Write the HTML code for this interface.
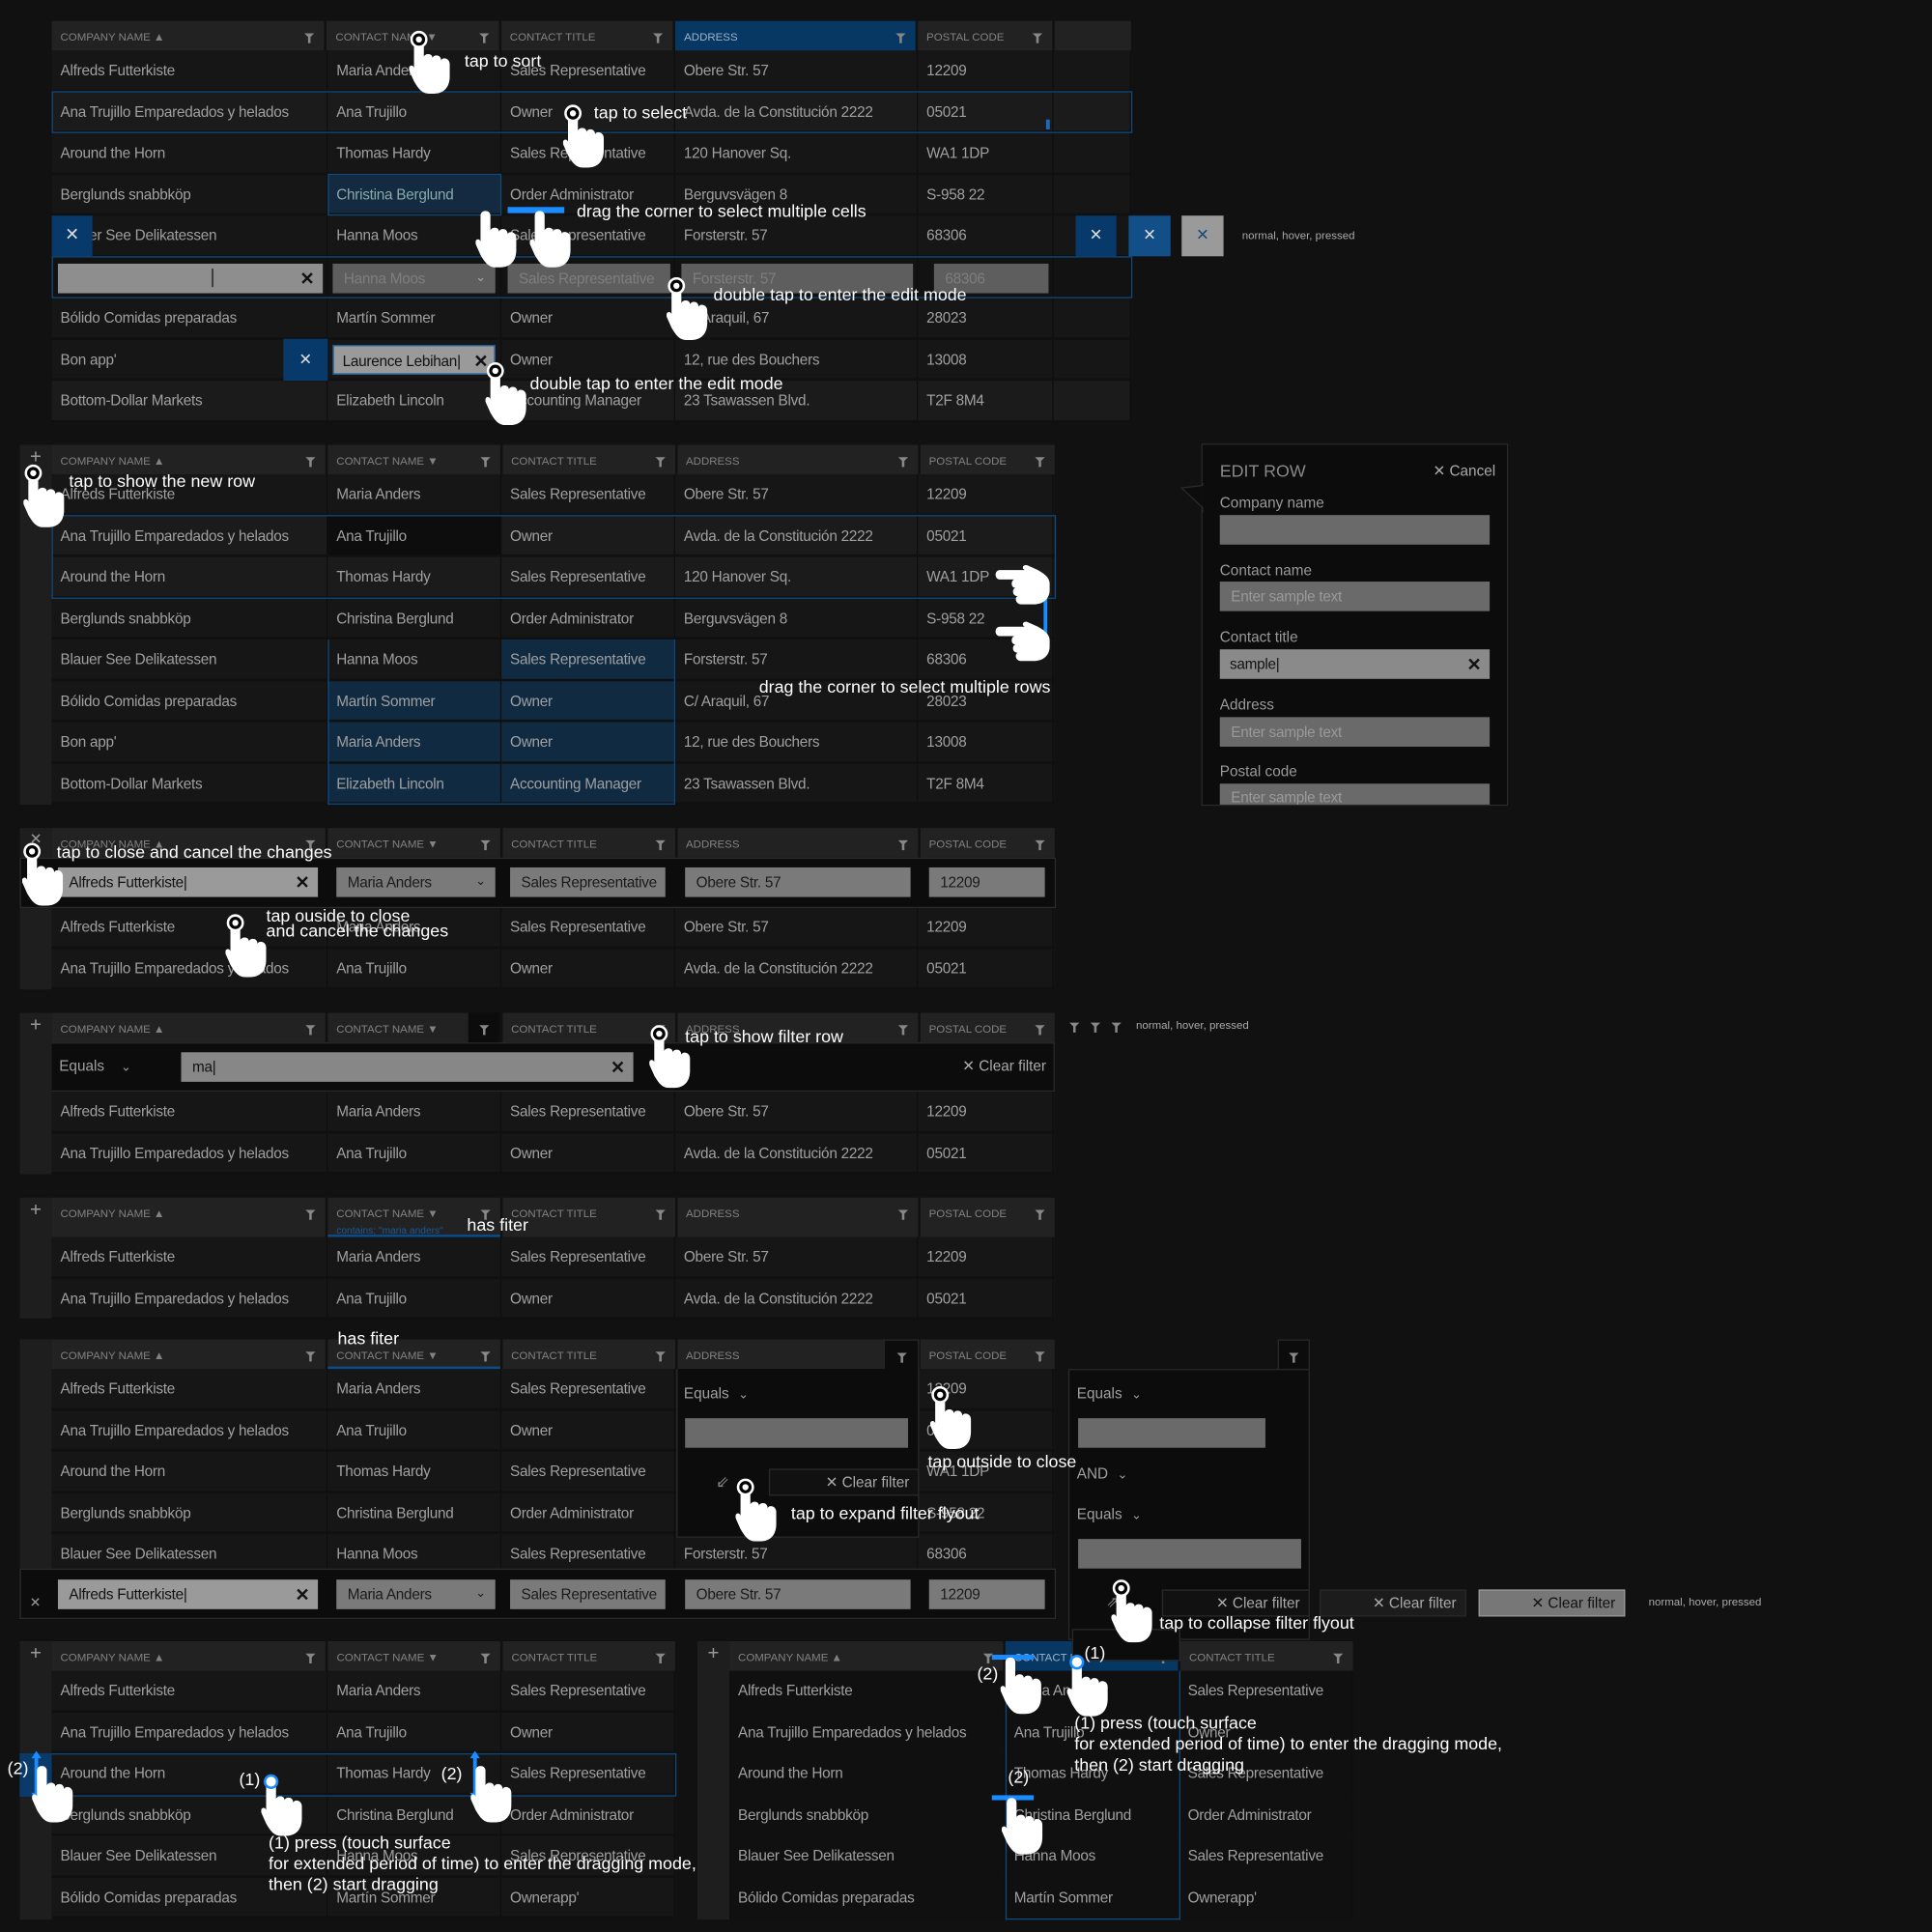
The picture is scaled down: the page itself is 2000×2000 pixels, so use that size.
<!DOCTYPE html>
<html><head><meta charset="utf-8">
<style>
html,body{margin:0;padding:0;background:#111;width:2000px;height:2000px;overflow:hidden}
#s{position:absolute;left:0;top:0;width:1568px;height:1568px;transform:scale(1.27551);transform-origin:0 0;font-family:"Liberation Sans",sans-serif;color:#a0a0a0}
.a{position:absolute}
.t{position:absolute}
.h,.r{display:flex;box-sizing:border-box}
.h{height:24px;background:#111}
.h>span{position:relative;box-sizing:border-box;background:#222;margin-right:2px;font-size:9px;color:#828282;line-height:26px;padding-left:7px;text-transform:uppercase;white-space:nowrap;overflow:hidden}
.h>span:last-child{margin-right:0}
.r{height:33.5px;background:#161616;border-bottom:2px solid #101010}
.r.l{background:#1b1b1b}
.r>span{box-sizing:border-box;border-right:1px solid #0e0e0e;font-size:12px;letter-spacing:-0.2px;line-height:33px;padding-left:7px;white-space:nowrap;overflow:hidden}
.h>span:nth-child(1),.r>span:nth-child(1){width:224px}
.h>span:nth-child(2),.r>span:nth-child(2){width:141px}
.h>span:nth-child(3),.r>span:nth-child(3){width:141px}
.h>span:nth-child(4),.r>span:nth-child(4){width:197px}
.h>span:nth-child(5),.r>span:nth-child(5){width:110px}
.h>span:nth-child(6),.r>span:nth-child(6){width:63px}
.fi{position:absolute;right:8px;top:10px;width:0;height:0;border-left:4px solid transparent;border-right:4px solid transparent;border-top:4px solid #888}
.fi:after{content:"";position:absolute;left:-1px;top:-1px;width:2px;height:5px;background:#888}
.strip{position:absolute;background:#1e1e1e;width:26px}
.plus{position:absolute;left:0;width:26px;text-align:center;color:#999;font-size:16px}
.inp{position:absolute;box-sizing:border-box;height:24px;font-size:12px;letter-spacing:-0.2px;line-height:24px;padding-left:9px;white-space:nowrap;overflow:hidden}
.g1{background:#9a9a9a;color:#111}
.g2{background:#6a6a6a;color:#1a1a1a}
.g3{background:#5e5e5e;color:#7e7e7e}
.x{position:absolute;right:7px;top:0;font-size:14px;font-weight:bold;color:#111}
.n{position:absolute;color:#fff;font-size:14px;white-space:nowrap;line-height:17px}
.sm{position:absolute;color:#aaa;font-size:9px;white-space:nowrap}
.bx{position:absolute;box-sizing:border-box}
.lab{position:absolute;font-size:12px;color:#999}
</style></head><body><div id="s">

<!-- ================= TABLE 1 ================= -->
<div class="t" style="left:42px;top:17px;width:876px">
<div class="h"><span>Company Name ▲<i class="fi"></i></span><span>Contact Name ▼<i class="fi"></i></span><span>Contact Title<i class="fi"></i></span><span style="background:#073763;color:#9fb4c8">Address<i class="fi"></i></span><span>Postal Code<i class="fi"></i></span><span></span></div>
<div class="r"><span>Alfreds Futterkiste</span><span>Maria Anders</span><span>Sales Representative</span><span>Obere Str. 57</span><span>12209</span><span></span></div>
<div class="r l"><span>Ana Trujillo Emparedados y helados</span><span>Ana Trujillo</span><span>Owner</span><span>Avda. de la Constitución 2222</span><span>05021</span><span></span></div>
<div class="r"><span>Around the Horn</span><span>Thomas Hardy</span><span>Sales Representative</span><span>120 Hanover Sq.</span><span>WA1 1DP</span><span></span></div>
<div class="r"><span>Berglunds snabbköp</span><span style="background:#132a40;color:#8aa">Christina Berglund</span><span>Order Administrator</span><span>Berguvsvägen 8</span><span>S-958 22</span><span></span></div>
<div class="r"><span>Blauer See Delikatessen</span><span>Hanna Moos</span><span>Sales Representative</span><span>Forsterstr. 57</span><span>68306</span><span></span></div>
<div class="r" style="background:#121212"><span></span><span></span><span></span><span></span><span></span><span></span></div>
<div class="r"><span>Bólido Comidas preparadas</span><span>Martín Sommer</span><span>Owner</span><span>C/ Araquil, 67</span><span>28023</span><span></span></div>
<div class="r"><span>Bon app'</span><span></span><span>Owner</span><span>12, rue des Bouchers</span><span>13008</span><span></span></div>
<div class="r l"><span>Bottom-Dollar Markets</span><span>Elizabeth Lincoln</span><span>Accounting Manager</span><span>23 Tsawassen Blvd.</span><span>T2F 8M4</span><span></span></div>
</div>
<div class="bx" style="left:42px;top:74px;width:877px;height:34px;border:1.5px solid #0f4a80"></div>
<div class="bx" style="left:266px;top:141px;width:141px;height:34px;border:1px solid #124a7c"></div>
<div class="bx" style="left:849px;top:97px;width:3px;height:8px;background:#1a6ac0"></div>
<div class="bx" style="left:42px;top:175px;width:33px;height:33px;background:#073a6a;color:#ddd;text-align:center;line-height:31px;font-size:14px">✕</div>
<div class="bx" style="left:873px;top:175px;width:33px;height:33px;background:#073a6a;color:#ddd;text-align:center;line-height:31px;font-size:13px">✕</div>
<div class="bx" style="left:916px;top:175px;width:34px;height:33px;background:#124e88;color:#ddd;text-align:center;line-height:31px;font-size:13px">✕</div>
<div class="bx" style="left:959px;top:175px;width:34px;height:33px;background:#9a9a9a;color:#1a4a7a;text-align:center;line-height:31px;font-size:13px">✕</div>
<div class="sm" style="left:1008px;top:186px">normal, hover, pressed</div>
<div class="bx" style="left:42px;top:208px;width:877px;height:34px;border:1.5px solid #0f4a80"></div>
<div class="inp" style="left:47px;top:214px;width:215px;background:#8e8e8e;color:#111"><span style="position:absolute;left:125px;top:4px;width:1px;height:15px;background:#111"></span><span class="x">✕</span></div>
<div class="inp g3" style="left:270px;top:214px;width:132px">Hanna Moos<span style="position:absolute;right:8px;color:#aaa;font-size:10px">⌄</span></div>
<div class="inp g3" style="left:412px;top:214px;width:132px">Sales Representative</div>
<div class="inp g3" style="left:553px;top:214px;width:188px">Forsterstr. 57</div>
<div class="inp g3" style="left:758px;top:214px;width:93px">68306</div>
<div class="bx" style="left:230px;top:275px;width:36px;height:34px;background:#073a6a;color:#ddd;text-align:center;line-height:33px;font-size:13px">✕</div>
<div class="inp g1" style="left:270px;top:280px;width:132px;border:1px solid #145a9a;padding-left:7px">Laurence Lebihan|<span class="x" style="right:5px">✕</span></div>

<!-- ================= TABLE 2 ================= -->
<div class="strip" style="left:16px;top:361px;height:292px"><div class="plus" style="top:2px">+</div></div>
<div class="t" style="left:42px;top:361px;width:814px">
<div class="h"><span>Company Name ▲<i class="fi"></i></span><span>Contact Name ▼<i class="fi"></i></span><span>Contact Title<i class="fi"></i></span><span>Address<i class="fi"></i></span><span>Postal Code<i class="fi"></i></span></div>
<div class="r"><span>Alfreds Futterkiste</span><span>Maria Anders</span><span>Sales Representative</span><span>Obere Str. 57</span><span>12209</span></div>
<div class="r l"><span>Ana Trujillo Emparedados y helados</span><span style="background:#0d0d0d">Ana Trujillo</span><span>Owner</span><span>Avda. de la Constitución 2222</span><span>05021</span></div>
<div class="r l"><span>Around the Horn</span><span>Thomas Hardy</span><span>Sales Representative</span><span>120 Hanover Sq.</span><span>WA1 1DP</span></div>
<div class="r"><span>Berglunds snabbköp</span><span>Christina Berglund</span><span>Order Administrator</span><span>Berguvsvägen 8</span><span>S-958 22</span></div>
<div class="r"><span>Blauer See Delikatessen</span><span>Hanna Moos</span><span style="background:#102a42">Sales Representative</span><span>Forsterstr. 57</span><span>68306</span></div>
<div class="r"><span>Bólido Comidas preparadas</span><span style="background:#102a42">Martín Sommer</span><span style="background:#102a42">Owner</span><span>C/ Araquil, 67</span><span>28023</span></div>
<div class="r"><span>Bon app'</span><span style="background:#102a42">Maria Anders</span><span style="background:#102a42">Owner</span><span>12, rue des Bouchers</span><span>13008</span></div>
<div class="r"><span>Bottom-Dollar Markets</span><span style="background:#102a42">Elizabeth Lincoln</span><span style="background:#102a42">Accounting Manager</span><span>23 Tsawassen Blvd.</span><span>T2F 8M4</span></div>
</div>
<div class="bx" style="left:42px;top:418px;width:815px;height:68px;border:1.5px solid #0f4a80"></div>
<div class="bx" style="left:266px;top:519px;width:282px;height:134px;border:1px solid #0f4a80;border-top:none"></div>
<div class="bx" style="left:847px;top:485px;width:3px;height:36px;background:#1a8cff"></div>

<!-- Edit row panel -->
<div class="bx" style="left:975px;top:360px;width:249px;height:294px;background:#0c0c0c;border:1px solid #2a2a2a"></div>
<svg class="a" style="left:958px;top:392px" width="20" height="24"><path d="M18 0 L18 2 L1 4 L18 20 L18 24" fill="#0c0c0c" stroke="#2a2a2a" stroke-width="1"/></svg>
<div class="a" style="left:990px;top:374px;font-size:14px;color:#888">EDIT ROW</div>
<div class="a" style="left:1163px;top:375px;font-size:12px;color:#aaa">✕ Cancel</div>
<div class="lab" style="left:990px;top:401px">Company name</div>
<div class="inp" style="left:990px;top:418px;width:219px;background:#6a6a6a"></div>
<div class="lab" style="left:990px;top:456px">Contact name</div>
<div class="inp" style="left:990px;top:472px;width:219px;background:#6a6a6a;color:#999">Enter sample text</div>
<div class="lab" style="left:990px;top:510px">Contact title</div>
<div class="inp" style="left:990px;top:527px;width:219px;background:#8a8a8a;color:#111;padding-left:8px">sample|<span class="x">✕</span></div>
<div class="lab" style="left:990px;top:565px">Address</div>
<div class="inp" style="left:990px;top:582px;width:219px;background:#6a6a6a;color:#999">Enter sample text</div>
<div class="lab" style="left:990px;top:619px">Postal code</div>
<div class="inp" style="left:990px;top:636px;width:219px;height:17px;background:#6a6a6a;color:#999;line-height:22px">Enter sample text</div>

<!-- ================= TABLE 3 ================= -->
<div class="strip" style="left:16px;top:672px;height:131px"><div class="plus" style="top:2px;font-size:12px">✕</div></div>
<div class="t" style="left:42px;top:672px;width:814px">
<div class="h"><span>Company Name ▲<i class="fi"></i></span><span>Contact Name ▼<i class="fi"></i></span><span>Contact Title<i class="fi"></i></span><span>Address<i class="fi"></i></span><span>Postal Code<i class="fi"></i></span></div>
<div style="height:40px"></div>
<div class="r"><span>Alfreds Futterkiste</span><span>Maria Anders</span><span>Sales Representative</span><span>Obere Str. 57</span><span>12209</span></div>
<div class="r"><span>Ana Trujillo Emparedados y helados</span><span>Ana Trujillo</span><span>Owner</span><span>Avda. de la Constitución 2222</span><span>05021</span></div>
</div>
<div class="bx" style="left:16px;top:696px;width:841px;height:41px;background:#0c0c0c;border:1.5px solid #2c2c2c"></div>
<div class="inp g1" style="left:47px;top:704px;width:211px">Alfreds Futterkiste|<span class="x">✕</span></div>
<div class="inp g2" style="left:273px;top:704px;width:129px;background:#7a7a7a">Maria Anders<span style="position:absolute;right:8px;font-size:10px">⌄</span></div>
<div class="inp g2" style="left:414px;top:704px;width:126px;background:#7a7a7a">Sales Representative</div>
<div class="inp g2" style="left:556px;top:704px;width:183px;background:#7a7a7a">Obere Str. 57</div>
<div class="inp g2" style="left:754px;top:704px;width:94px;background:#7a7a7a">12209</div>

<!-- ================= TABLE 4 ================= -->
<div class="strip" style="left:16px;top:822px;height:131px"><div class="plus" style="top:2px">+</div></div>
<div class="t" style="left:42px;top:822px;width:814px">
<div class="h"><span>Company Name ▲<i class="fi"></i></span><span>Contact Name ▼<b style="position:absolute;right:0;top:0;width:26px;height:30px;background:#0c0c0c"></b><i class="fi" style="right:9px;z-index:2"></i></span><span>Contact Title<i class="fi"></i></span><span>Address<i class="fi"></i></span><span>Postal Code<i class="fi"></i></span></div>
<div style="height:40px;background:#0c0c0c;box-sizing:border-box;border:1.5px solid #2a2a2a;border-left:none"></div>
<div class="r"><span>Alfreds Futterkiste</span><span>Maria Anders</span><span>Sales Representative</span><span>Obere Str. 57</span><span>12209</span></div>
<div class="r"><span>Ana Trujillo Emparedados y helados</span><span>Ana Trujillo</span><span>Owner</span><span>Avda. de la Constitución 2222</span><span>05021</span></div>
</div>
<div class="a" style="left:48px;top:858px;font-size:12px">Equals <span style="margin-left:10px;font-size:10px">⌄</span></div>
<div class="inp" style="left:147px;top:854px;width:367px;background:#878787;color:#111">ma|<span class="x">✕</span></div>
<div class="a" style="left:781px;top:858px;font-size:12px;color:#aaa">✕ Clear filter</div>
<div class="a" style="left:868px;top:829px;width:60px;height:10px"><i class="fi" style="left:0;top:1px;right:auto"></i><i class="fi" style="left:17px;top:1px;right:auto"></i><i class="fi" style="left:34px;top:1px;right:auto"></i></div>
<div class="sm" style="left:922px;top:827px">normal, hover, pressed</div>

<!-- ================= TABLE 5 ================= -->
<div class="strip" style="left:16px;top:972px;height:98px"><div class="plus" style="top:2px">+</div></div>
<div class="t" style="left:42px;top:972px;width:814px">
<div class="h" style="height:32px"><span>Company Name ▲<i class="fi"></i></span><span style="border-bottom:2px solid #0c4a88">Contact Name ▼<i class="fi"></i><b style="position:absolute;left:7px;top:14px;font-size:8px;color:#1a5a99;font-weight:normal;text-transform:none">contains: "maria anders"</b></span><span>Contact Title<i class="fi"></i></span><span>Address<i class="fi"></i></span><span>Postal Code<i class="fi"></i></span></div>
<div class="r"><span>Alfreds Futterkiste</span><span>Maria Anders</span><span>Sales Representative</span><span>Obere Str. 57</span><span>12209</span></div>
<div class="r"><span>Ana Trujillo Emparedados y helados</span><span>Ana Trujillo</span><span>Owner</span><span>Avda. de la Constitución 2222</span><span>05021</span></div>
</div>
<div class="n" style="left:379px;top:986px">has fiter</div>

<!-- ================= TABLE 6 ================= -->
<div class="strip" style="left:16px;top:1087px;height:226px"></div>
<div class="t" style="left:42px;top:1087px;width:814px">
<div class="h"><span>Company Name ▲<i class="fi"></i></span><span style="border-bottom:2px solid #0c4a88">Contact Name ▼<i class="fi"></i></span><span>Contact Title<i class="fi"></i></span><span>Address<i class="fi"></i></span><span>Postal Code<i class="fi"></i></span></div>
<div class="r"><span>Alfreds Futterkiste</span><span>Maria Anders</span><span>Sales Representative</span><span></span><span>12209</span></div>
<div class="r"><span>Ana Trujillo Emparedados y helados</span><span>Ana Trujillo</span><span>Owner</span><span></span><span>05021</span></div>
<div class="r"><span>Around the Horn</span><span>Thomas Hardy</span><span>Sales Representative</span><span></span><span>WA1 1DP</span></div>
<div class="r"><span>Berglunds snabbköp</span><span>Christina Berglund</span><span>Order Administrator</span><span></span><span>S-958 22</span></div>
<div class="r"><span>Blauer See Delikatessen</span><span>Hanna Moos</span><span>Sales Representative</span><span>Forsterstr. 57</span><span>68306</span></div>
</div>
<div class="n" style="left:274px;top:1078px">has fiter</div>
<div class="bx" style="left:717px;top:1087px;width:29px;height:26px;background:#0c0c0c;border:1px solid #2a2a2a;border-bottom:none"><i class="fi" style="right:9px;top:10px"></i></div>
<div class="bx" style="left:549px;top:1111px;width:197px;height:137px;background:#0c0c0c;border:1px solid #2a2a2a;border-top:none"></div>
<div class="a" style="left:555px;top:1124px;font-size:12px">Equals <span style="margin-left:4px;font-size:10px">⌄</span></div>
<div class="inp" style="left:556px;top:1151px;width:181px;background:#6a6a6a"></div>
<div class="a" style="left:581px;top:1195px;font-size:13px;color:#888">⇙</div>
<div class="bx" style="left:624px;top:1192px;width:122px;height:22px;background:#111;border:1px solid #2a2a2a;font-size:12px;line-height:20px;text-align:right;padding-right:7px;color:#aaa">✕ Clear filter</div>
<div class="bx" style="left:16px;top:1273px;width:841px;height:41px;background:#0c0c0c;border:1.5px solid #2c2c2c"></div>
<div class="a" style="left:24px;top:1294px;font-size:11px;color:#999">✕</div>
<div class="inp g1" style="left:47px;top:1282px;width:211px">Alfreds Futterkiste|<span class="x">✕</span></div>
<div class="inp g2" style="left:273px;top:1282px;width:129px;background:#7a7a7a">Maria Anders<span style="position:absolute;right:8px;font-size:10px">⌄</span></div>
<div class="inp g2" style="left:414px;top:1282px;width:126px;background:#7a7a7a">Sales Representative</div>
<div class="inp g2" style="left:556px;top:1282px;width:183px;background:#7a7a7a">Obere Str. 57</div>
<div class="inp g2" style="left:754px;top:1282px;width:94px;background:#7a7a7a">12209</div>

<!-- right flyout -->
<div class="bx" style="left:1037px;top:1087px;width:26px;height:26px;background:#0c0c0c;border:1px solid #2a2a2a;border-bottom:none"><i class="fi" style="right:8px;top:10px"></i></div>
<div class="bx" style="left:867px;top:1111px;width:196px;height:220px;background:#0c0c0c;border:1px solid #2a2a2a"></div>
<div class="a" style="left:874px;top:1124px;font-size:12px">Equals <span style="margin-left:4px;font-size:10px">⌄</span></div>
<div class="inp" style="left:875px;top:1151px;width:152px;background:#6a6a6a"></div>
<div class="a" style="left:874px;top:1189px;font-size:12px">AND <span style="margin-left:4px;font-size:10px">⌄</span></div>
<div class="a" style="left:874px;top:1222px;font-size:12px">Equals <span style="margin-left:4px;font-size:10px">⌄</span></div>
<div class="inp" style="left:875px;top:1249px;width:181px;background:#6a6a6a"></div>
<div class="a" style="left:898px;top:1293px;font-size:12px;color:#888">⇗</div>
<div class="bx" style="left:943px;top:1290px;width:120px;height:22px;background:#111;border:1px solid #2a2a2a;font-size:12px;line-height:20px;text-align:right;padding-right:7px;color:#aaa">✕ Clear filter</div>
<div class="bx" style="left:1071px;top:1290px;width:119px;height:22px;background:#1c1c1c;border:1px solid #2a2a2a;font-size:12px;line-height:20px;text-align:right;padding-right:7px;color:#aaa">✕ Clear filter</div>
<div class="bx" style="left:1200px;top:1290px;width:119px;height:22px;background:#777;border:1px solid #999;font-size:12px;line-height:20px;text-align:right;padding-right:7px;color:#111">✕ Clear filter</div>
<div class="sm" style="left:1338px;top:1295px">normal, hover, pressed</div>

<!-- ================= TABLE 7 ================= -->
<div class="strip" style="left:16px;top:1332px;height:226px"><div class="plus" style="top:2px">+</div></div>
<div class="t" style="left:42px;top:1332px;width:506px">
<div class="h"><span>Company Name ▲<i class="fi"></i></span><span>Contact Name ▼<i class="fi"></i></span><span>Contact Title<i class="fi"></i></span></div>
<div class="r"><span>Alfreds Futterkiste</span><span>Maria Anders</span><span>Sales Representative</span></div>
<div class="r"><span>Ana Trujillo Emparedados y helados</span><span>Ana Trujillo</span><span>Owner</span></div>
<div class="r"><span>Around the Horn</span><span>Thomas Hardy</span><span>Sales Representative</span></div>
<div class="r"><span>Berglunds snabbköp</span><span>Christina Berglund</span><span>Order Administrator</span></div>
<div class="r"><span>Blauer See Delikatessen</span><span>Hanna Moos</span><span>Sales Representative</span></div>
<div class="r"><span>Bólido Comidas preparadas</span><span>Martín Sommer</span><span>Ownerapp'</span></div>
</div>
<div class="bx" style="left:16px;top:1423px;width:533px;height:35px;border:1.5px solid #0f4a80"></div>
<div class="bx" style="left:16px;top:1423px;width:26px;height:35px;background:#0a3a6a"></div>

<!-- ================= TABLE 8 ================= -->
<div class="strip" style="left:566px;top:1332px;height:226px"><div class="plus" style="top:2px">+</div></div>
<div class="t" style="left:592px;top:1332px;width:506px">
<div class="h"><span>Company Name ▲<i class="fi"></i></span><span style="background:#073763;color:#9fb4c8">Contact Name ▼<i class="fi"></i></span><span>Contact Title<i class="fi"></i></span></div>
<div class="r" style="background:#101010"><span>Alfreds Futterkiste</span><span>Maria Anders</span><span>Sales Representative</span></div>
<div class="r" style="background:#101010"><span>Ana Trujillo Emparedados y helados</span><span>Ana Trujillo</span><span>Owner</span></div>
<div class="r" style="background:#101010"><span>Around the Horn</span><span>Thomas Hardy</span><span>Sales Representative</span></div>
<div class="r" style="background:#101010"><span>Berglunds snabbköp</span><span>Christina Berglund</span><span>Order Administrator</span></div>
<div class="r" style="background:#101010"><span>Blauer See Delikatessen</span><span>Hanna Moos</span><span>Sales Representative</span></div>
<div class="r" style="background:#101010"><span>Bólido Comidas preparadas</span><span>Martín Sommer</span><span>Ownerapp'</span></div>
</div>
<div class="bx" style="left:816px;top:1356px;width:142px;height:202px;border:1px solid #0f4a80;border-top:none"></div>
<div class="bx" style="left:870px;top:1322px;width:88px;height:26px;background:#0c0c0c;border:1px solid #2a2a2a"></div>

<!-- ================= OVERLAYS: hands & drag bars ================= -->
<svg class="a" style="left:0;top:0" width="1568" height="1568" viewBox="0 0 1568 1568">
<defs>
<symbol id="hn" viewBox="0 0 40 52"><path d="M4 10 C4 5 12 5 12 10 L12 22 C13 19 19 19 19 23 C20 20 26 20 26 25 C27 22 33 23 33 28 L33 38 C33 47 28 52 20 52 L16 52 C10 52 7 47 4 42 L0 33 C-1 29 3 28 4 31 Z" fill="#fff"/></symbol>
<symbol id="hd" viewBox="0 0 40 52"><use href="#hn" width="40" height="52"/><circle cx="8" cy="8" r="6" fill="#000" stroke="#fff" stroke-width="2"/><circle cx="8" cy="8" r="2.5" fill="#fff"/></symbol>
<symbol id="hb" viewBox="0 0 40 52"><use href="#hn" width="40" height="52"/><circle cx="8" cy="8" r="5" fill="#fff" stroke="#1a8cff" stroke-width="2"/></symbol>
</defs>
<!-- table1 -->
<use href="#hd" x="332" y="23" width="40" height="54"/>
<use href="#hd" x="457" y="83" width="40" height="54"/>
<rect x="412" y="168" width="46" height="5" fill="#1a8cff"/>
<use href="#hn" x="386" y="164" width="40" height="54"/>
<use href="#hn" x="430" y="164" width="40" height="54"/>
<use href="#hd" x="541" y="223" width="40" height="54"/>
<use href="#hd" x="394" y="292" width="40" height="54"/>
<!-- table2 -->
<use href="#hd" x="19" y="375" width="40" height="54"/>
<g transform="translate(806,458) rotate(90) scale(1,-1)"><use href="#hn" x="0" y="-4" width="40" height="50"/></g>
<g transform="translate(806,504) rotate(90) scale(1,-1)"><use href="#hn" x="0" y="-4" width="40" height="50"/></g>
<!-- table3 -->
<use href="#hd" x="18" y="682" width="40" height="54"/>
<use href="#hd" x="183" y="740" width="40" height="54"/>
<!-- table4 -->
<use href="#hd" x="527" y="830" width="40" height="54"/>
<!-- table6 -->
<use href="#hd" x="755" y="1123" width="40" height="54"/>
<use href="#hd" x="597" y="1198" width="40" height="54"/>
<use href="#hd" x="902" y="1280" width="40" height="54"/>
<!-- table7 -->
<rect x="28" y="1424" width="3" height="34" fill="#1a8cff"/>
<path d="M29.5 1421 l-4 6 h8 z M29.5 1461 l-4 -6 h8 z" fill="#1a8cff"/>
<use href="#hn" x="26" y="1426" width="40" height="54"/>
<use href="#hb" x="212" y="1437" width="40" height="54"/>
<rect x="384" y="1424" width="3" height="34" fill="#1a8cff"/>
<path d="M385.5 1421 l-4 6 h8 z M385.5 1461 l-4 -6 h8 z" fill="#1a8cff"/>
<use href="#hn" x="382" y="1426" width="40" height="54"/>
<!-- table8 -->
<rect x="805" y="1343" width="34" height="4" fill="#1a8cff"/>
<use href="#hn" x="812" y="1338" width="40" height="54"/>
<use href="#hb" x="866" y="1340" width="40" height="54"/>
<rect x="805" y="1457" width="34" height="4" fill="#1a8cff"/>
<use href="#hn" x="813" y="1452" width="40" height="54"/>
</svg>

<!-- annotations -->
<div class="n" style="left:377px;top:41px">tap to sort</div>
<div class="n" style="left:482px;top:83px">tap to select</div>
<div class="n" style="left:468px;top:163px">drag the corner to select multiple cells</div>
<div class="n" style="left:579px;top:231px">double tap to enter the edit mode</div>
<div class="n" style="left:430px;top:303px">double tap to enter the edit mode</div>
<div class="n" style="left:56px;top:382px">tap to show the new row</div>
<div class="n" style="left:616px;top:549px">drag the corner to select multiple rows</div>
<div class="n" style="left:46px;top:683px">tap to close and cancel the changes</div>
<div class="n" style="left:216px;top:737px;line-height:12px">tap ouside to close<br>and cancel the changes</div>
<div class="n" style="left:556px;top:833px">tap to show filter row</div>
<div class="n" style="left:753px;top:1178px">tap outside to close</div>
<div class="n" style="left:642px;top:1220px">tap to expand filter flyout</div>
<div class="n" style="left:941px;top:1309px">tap to collapse filter flyout</div>
<div class="n" style="left:6px;top:1427px">(2)</div>
<div class="n" style="left:194px;top:1436px">(1)</div>
<div class="n" style="left:358px;top:1431px">(2)</div>
<div class="n" style="left:218px;top:1487px">(1) press (touch surface<br>for extended period of time) to enter the dragging mode,<br>then (2) start dragging</div>
<div class="n" style="left:880px;top:1333px">(1)</div>
<div class="n" style="left:793px;top:1350px">(2)</div>
<div class="n" style="left:818px;top:1434px">(2)</div>
<div class="n" style="left:872px;top:1390px">(1) press (touch surface<br>for extended period of time) to enter the dragging mode,<br>then (2) start dragging</div>

</div></body></html>
